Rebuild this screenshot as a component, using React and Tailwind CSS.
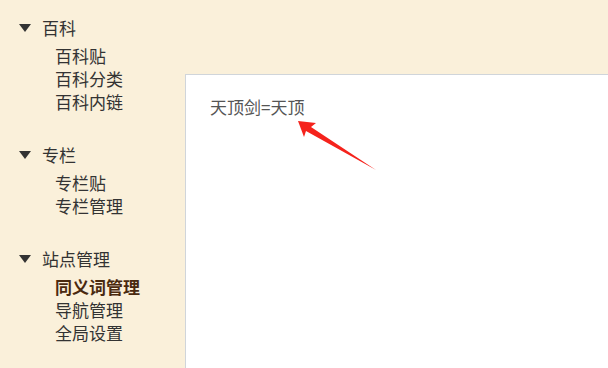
import React from 'react';

const groups = [
  { title: '百科', items: ['百科贴', '百科分类', '百科内链'] },
  { title: '专栏', items: ['专栏贴', '专栏管理'] },
  { title: '站点管理', items: ['同义词管理', '导航管理', '全局设置'], active: '同义词管理' },
];

const App = () => {
  return (
    <div
      className="relative flex w-[608px] h-[368px] overflow-hidden bg-[#faf0da] text-[17px] leading-[23px] text-[#333]"
      style={{ fontFamily: '"Noto Sans CJK SC", "Noto Sans", sans-serif' }}
    >
      <div className="w-[185px] shrink-0 pt-[16px]">
        {groups.map((g) => (
          <div key={g.title} className="mb-[30px]">
            <div className="flex items-center pl-[19px]">
              <span className="w-0 h-0 border-l-[6px] border-r-[6px] border-t-[8px] border-l-transparent border-r-transparent border-t-[#333]" />
              <span className="ml-[11px]">{g.title}</span>
            </div>
            <ul className="mt-[5px] pl-[55px]">
              {g.items.map((it) => (
                <li
                  key={it}
                  className={it === g.active ? 'font-bold text-[#4a2a10]' : ''}
                >
                  {it}
                </li>
              ))}
            </ul>
          </div>
        ))}
      </div>

      <div className="flex-1 mt-[74px] bg-white border-l border-t border-[#d0d5da] pl-[24px] pt-[20px]">
        <p className="text-[#555]">天顶剑=天顶</p>
      </div>

      <svg className="absolute left-0 top-0" width="608" height="368" viewBox="0 0 608 368">
        <polygon
          points="298,121 316,123 311,127 376,170 306,131 304,137"
          fill="#f5231c"
        />
      </svg>
    </div>
  );
};

export default App;
